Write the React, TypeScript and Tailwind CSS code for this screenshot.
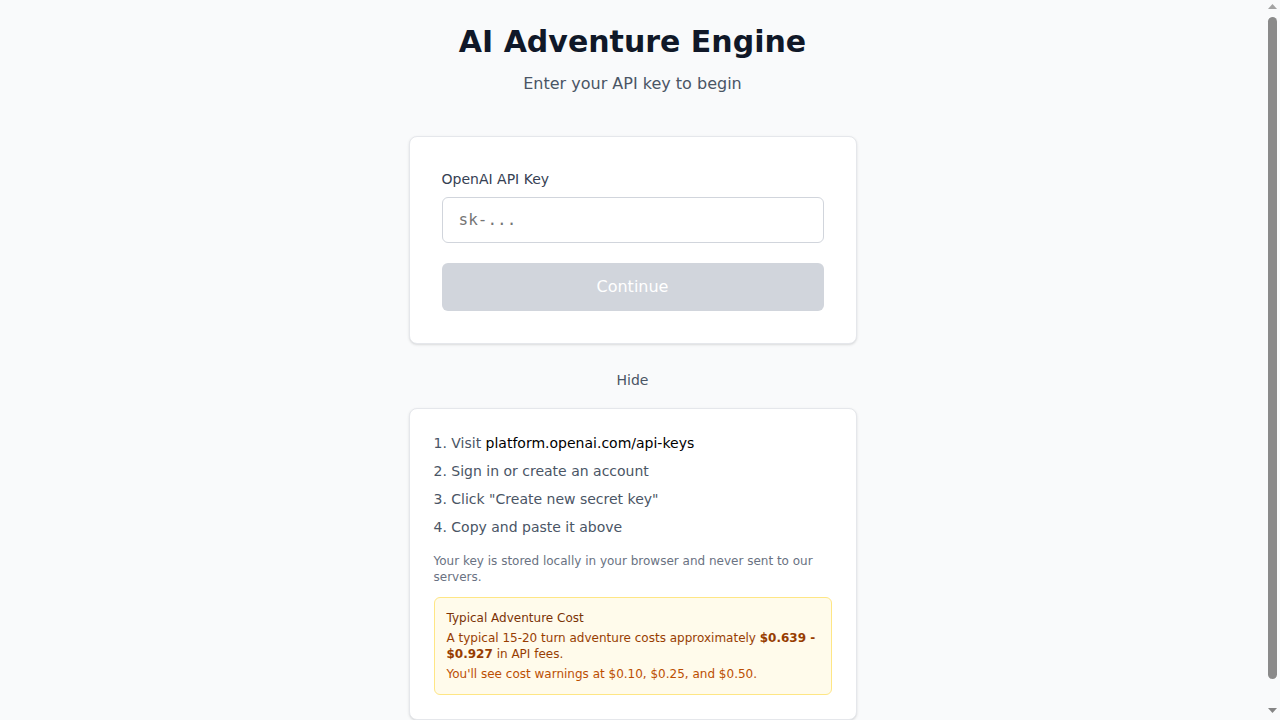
const Scrollbar = () => (
    <div className="w-[15px] h-screen shrink-0 bg-[#f9fafb] flex flex-col items-center">
        <svg width="9" height="6" viewBox="0 0 9 6" className="mt-[4px]">
            <path d="M4.5 0 L9 5 L0 5 Z" fill="#a3a3a3" />
        </svg>
        <div className="mt-[7px] w-[9px] h-[662px] rounded-full bg-[#8a8a8a]" />
        <div className="flex-1" />
        <svg width="9" height="6" viewBox="0 0 9 6" className="mb-[6px]">
            <path d="M0 0 L9 0 L4.5 5 Z" fill="#858585" />
        </svg>
    </div>
);

export default function App() {
    return (
        <div className="h-screen flex bg-gray-50 font-['DejaVu_Sans',sans-serif]">
            <div className="flex-1 h-screen overflow-y-auto [scrollbar-width:none]">
                <div className="max-w-md mx-auto pt-6 pb-8">
                    <div className="text-center mb-10">
                        <h1 className="text-3xl font-bold text-gray-900 mb-3">AI Adventure Engine</h1>
                        <p className="text-base text-gray-600">Enter your API key to begin</p>
                    </div>

                    <div className="bg-white border border-gray-200 rounded-lg shadow-sm p-8">
                        <label className="block text-sm font-medium text-gray-700 mb-2">OpenAI API Key</label>
                        <input
                            type="password"
                            placeholder="sk-..."
                            className="w-full px-4 py-2.5 text-base border border-gray-300 rounded-md bg-white font-['DejaVu_Sans_Mono',monospace] placeholder:text-[#757575] outline-none"
                        />
                        <button
                            disabled
                            className="mt-5 w-full py-3 text-base text-white bg-gray-300 rounded-md"
                        >
                            Continue
                        </button>
                    </div>

                    <div className="mt-6 text-center">
                        <button className="py-0.5 text-sm text-gray-600">Hide</button>
                    </div>

                    <div className="mt-4 bg-white border border-gray-200 rounded-lg shadow-sm p-6">
                        <ol className="space-y-2 text-sm text-gray-600">
                            <li>
                                1. Visit <a className="text-black">platform.openai.com/api-keys</a>
                            </li>
                            <li>2. Sign in or create an account</li>
                            <li>3. Click "Create new secret key"</li>
                            <li>4. Copy and paste it above</li>
                        </ol>
                        <p className="mt-4 text-xs text-gray-500">
                            Your key is stored locally in your browser and never sent to our servers.
                        </p>
                        <div className="mt-3 bg-amber-50 border border-amber-200 rounded-md p-3">
                            <p className="mb-1 text-xs font-medium text-amber-900">Typical Adventure Cost</p>
                            <p className="text-xs text-amber-800">
                                A typical 15-20 turn adventure costs approximately <strong className="font-bold">$0.639 - $0.927</strong> in API fees.
                            </p>
                            <p className="mt-1 text-xs text-amber-700">
                                You'll see cost warnings at $0.10, $0.25, and $0.50.
                            </p>
                        </div>
                    </div>
                </div>
            </div>
            <Scrollbar />
        </div>
    );
}
